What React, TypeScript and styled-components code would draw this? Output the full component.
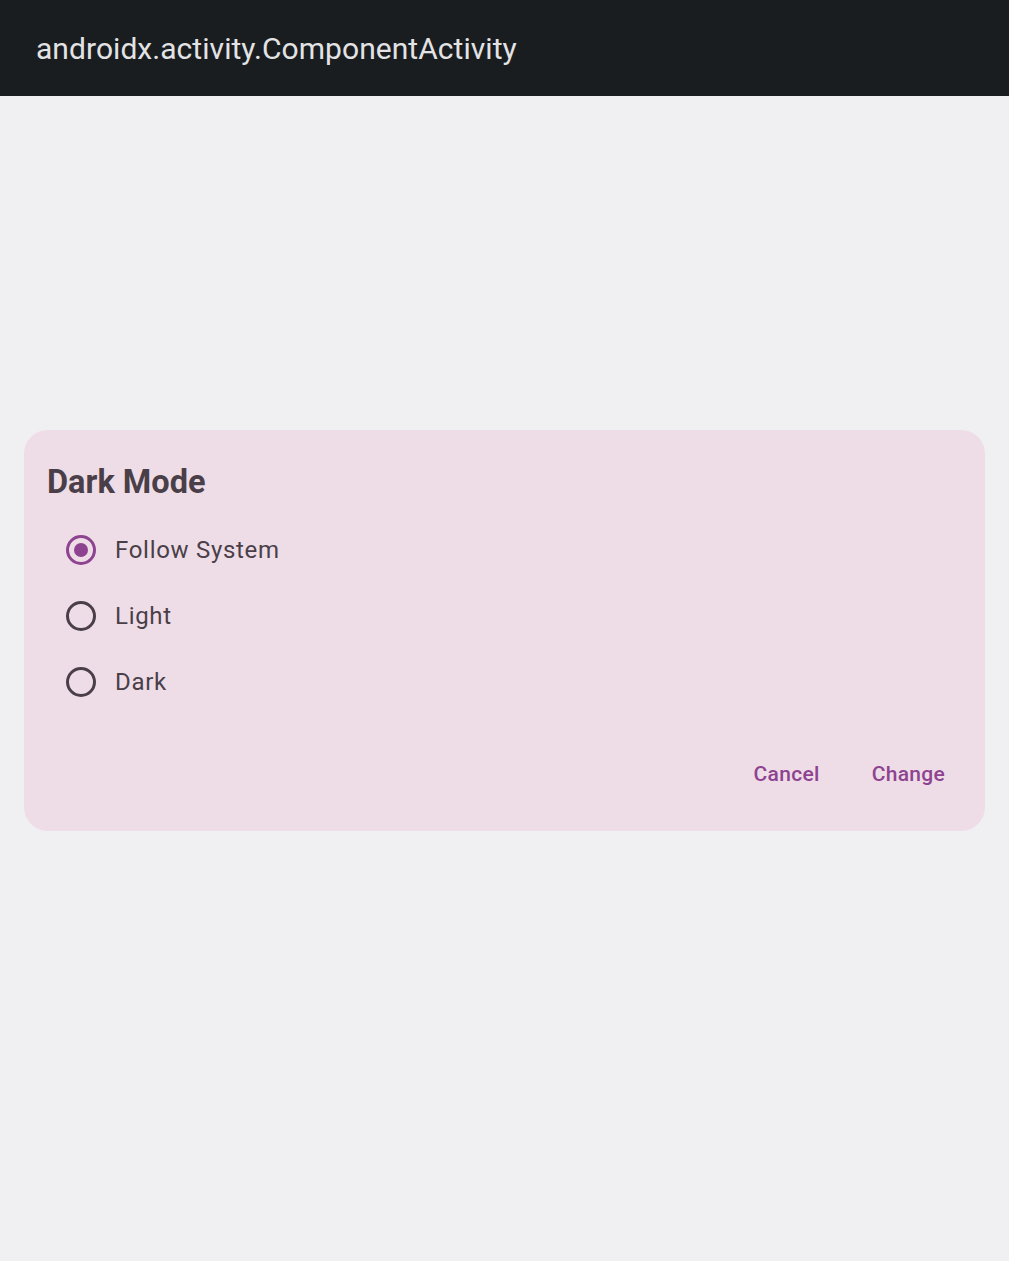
import React, { useState } from "react";
import styled, { createGlobalStyle } from "styled-components";

const Global = createGlobalStyle`
  html, body { margin: 0; padding: 0; }
  body { background: #f0eff2; font-family: Roboto, "Noto Sans", sans-serif; }
`;

const Screen = styled.div`
  width: 1009px;
  height: 1261px;
  display: flex;
  flex-direction: column;
  background: #f0eff2;
`;

const TopBar = styled.header`
  height: 96px;
  flex: none;
  background: #1a1d20;
  display: flex;
  align-items: center;
  padding: 0 36px;
  box-sizing: border-box;
`;

const BarTitle = styled.h1`
  margin: 0;
  font-family: Roboto, sans-serif;
  font-weight: 400;
  font-size: 30px;
  color: #e3e3e5;
  letter-spacing: 0.05px;
`;

const Body = styled.main`
  flex: 1;
  display: flex;
  flex-direction: column;
  padding: 334px 24px 0;
`;

const Dialog = styled.section`
  background: #eedde7;
  border-radius: 24px;
  height: 401px;
  box-sizing: border-box;
  padding: 30px 23px 0;
  display: flex;
  flex-direction: column;
`;

const DialogTitle = styled.h2`
  margin: 0 0 13px;
  font-family: Roboto, sans-serif;
  font-weight: 700;
  font-size: 32.5px;
  line-height: 44px;
  color: #4a3f48;
`;

const Options = styled.div`
  display: flex;
  flex-direction: column;
`;

const Option = styled.label`
  height: 66px;
  display: flex;
  align-items: center;
  gap: 19px;
  padding-left: 19px;
  cursor: pointer;
`;

const RadioCircle = styled.span<{ $checked: boolean }>`
  width: 30px;
  height: 30px;
  box-sizing: border-box;
  border-radius: 50%;
  border: 3px solid ${(p) => (p.$checked ? "#8e4391" : "#4a3f48")};
  display: flex;
  align-items: center;
  justify-content: center;
  &::after {
    content: "";
    width: 14px;
    height: 14px;
    border-radius: 50%;
    background: #8e4391;
    display: ${(p) => (p.$checked ? "block" : "none")};
  }
`;

const OptionText = styled.span`
  font-family: Roboto, sans-serif;
  font-size: 24px;
  letter-spacing: 0.7px;
  color: #4a3f48;
`;

const Actions = styled.div`
  margin-top: auto;
  margin-bottom: 45px;
  display: flex;
  justify-content: flex-end;
  gap: 52px;
  padding-right: 17px;
`;

const TextButton = styled.button`
  background: none;
  border: none;
  padding: 0;
  font-family: Roboto, sans-serif;
  font-weight: 500;
  font-size: 21px;
  letter-spacing: 0.3px;
  color: #8e4391;
  cursor: pointer;
`;

const options = ["Follow System", "Light", "Dark"];

export default function App() {
  const [sel, setSel] = useState(0);
  return (
    <Screen>
      <Global />
      <TopBar>
        <BarTitle>androidx.activity.ComponentActivity</BarTitle>
      </TopBar>
      <Body>
        <Dialog>
          <DialogTitle>Dark Mode</DialogTitle>
          <Options>
            {options.map((o, i) => (
              <Option key={o} onClick={() => setSel(i)}>
                <RadioCircle $checked={sel === i} />
                <OptionText>{o}</OptionText>
              </Option>
            ))}
          </Options>
          <Actions>
            <TextButton>Cancel</TextButton>
            <TextButton>Change</TextButton>
          </Actions>
        </Dialog>
      </Body>
    </Screen>
  );
}
